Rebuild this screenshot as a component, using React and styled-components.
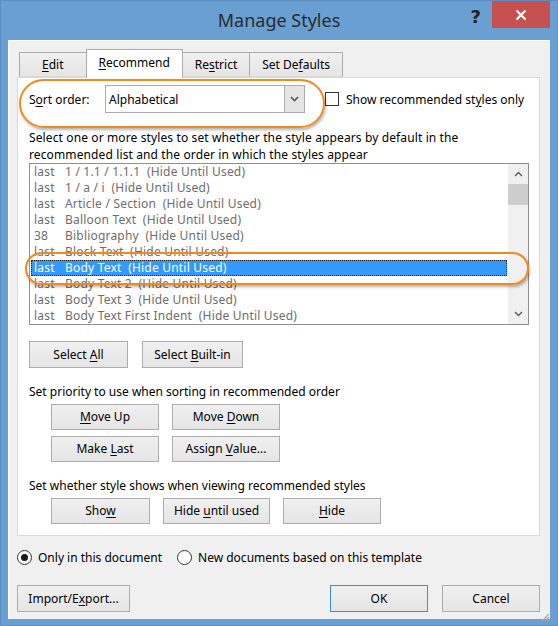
import React from "react";
import styled, { createGlobalStyle } from "styled-components";

const GlobalStyle = createGlobalStyle`
  html, body {
    margin: 0;
    padding: 0;
    background: #6a9fd2;
  }
  body {
    font-family: "Noto Sans", "DejaVu Sans", sans-serif;
    font-size: 12px;
    color: #000;
  }
`;

const styles = [
  { priority: "last", name: "1 / 1.1 / 1.1.1" },
  { priority: "last", name: "1 / a / i" },
  { priority: "last", name: "Article / Section" },
  { priority: "last", name: "Balloon Text" },
  { priority: "38", name: "Bibliography" },
  { priority: "last", name: "Block Text" },
  { priority: "last", name: "Body Text", selected: true },
  { priority: "last", name: "Body Text 2" },
  { priority: "last", name: "Body Text 3" },
  { priority: "last", name: "Body Text First Indent" },
];

const App = () => {
  return (
    <>
      <GlobalStyle />
      <Window>
        <TitleBar>
          <span />
          <Title>Manage Styles</Title>
          <TitleButtons>
            <HelpButton>?</HelpButton>
            <CloseButton>
              <svg width="12" height="12" viewBox="0 0 12 12">
                <path d="M1.5 1.5 L10.5 10.5 M10.5 1.5 L1.5 10.5" stroke="#fff" strokeWidth="2.2" />
              </svg>
            </CloseButton>
          </TitleButtons>
        </TitleBar>

        <Client>
          <TabStrip>
            <Tab $first><U>E</U>dit</Tab>
            <Tab $active><U>R</U>ecommend</Tab>
            <Tab>Re<U>s</U>trict</Tab>
            <Tab>Set De<U>f</U>aults</Tab>
          </TabStrip>

          <Panel>
            <Highlight $left={1} $top={1} $width={306} $height={49} />
            <Highlight $left={7} $top={174} $width={504} $height={33} />

            <SortRow>
              <SortLabel>S<U>o</U>rt order:</SortLabel>
              <Combo>
                <ComboValue>Alphabetical</ComboValue>
                <ComboButton>
                  <svg width="9" height="6" viewBox="0 0 9 6">
                    <path d="M1 1 L4.5 4.5 L8 1" stroke="#555" strokeWidth="1.6" fill="none" />
                  </svg>
                </ComboButton>
              </Combo>
              <CheckLabel>
                <CheckBox />
                <span>Show recommended st<U>y</U>les only</span>
              </CheckLabel>
            </SortRow>

            <Description>
              Select one or more styles to set whether the style appears by default in the
              <br />
              recommended list and the order in which the styles appear
            </Description>

            <ListBox>
              <ListRows>
                {styles.map((s) => (
                  <ListRow key={s.name} $selected={s.selected}>
                    <Priority>{s.priority}</Priority>
                    <StyleName>{s.name + "  (Hide Until Used)"}</StyleName>
                  </ListRow>
                ))}
              </ListRows>
              <Scrollbar>
                <ScrollArrow>
                  <svg width="9" height="6" viewBox="0 0 9 6">
                    <path d="M1 5 L4.5 1.5 L8 5" stroke="#606060" strokeWidth="1.5" fill="none" />
                  </svg>
                </ScrollArrow>
                <Track>
                  <Thumb />
                </Track>
                <ScrollArrow>
                  <svg width="9" height="6" viewBox="0 0 9 6">
                    <path d="M1 1 L4.5 4.5 L8 1" stroke="#606060" strokeWidth="1.5" fill="none" />
                  </svg>
                </ScrollArrow>
              </Scrollbar>
            </ListBox>

            <ButtonRow $top={16}>
              <Button $w={99} $h={27}>Select <U>A</U>ll</Button>
              <Button $w={101} $h={27}>Select <U>B</U>uilt-in</Button>
            </ButtonRow>

            <SectionText>Set priority to use when sorting in recommended order</SectionText>
            <ButtonGrid>
              <Button $w={108}><U>M</U>ove Up</Button>
              <Button $w={108}>Move <U>D</U>own</Button>
              <Button $w={108}>Make <U>L</U>ast</Button>
              <Button $w={108}>Assign <U>V</U>alue...</Button>
            </ButtonGrid>

            <SectionText>Set whether style shows when viewing recommended styles</SectionText>
            <ButtonRow $top={4} $indent={22} $gap={13}>
              <Button $w={99}>Sho<U>w</U></Button>
              <Button $w={107}>Hide <U>u</U>ntil used</Button>
              <Button $w={98}><U>H</U>ide</Button>
            </ButtonRow>
          </Panel>

          <RadioRow>
            <RadioLabel>
              <Radio $checked />
              <span>Only in this document</span>
            </RadioLabel>
            <RadioLabel>
              <Radio />
              <span>New documents based on this template</span>
            </RadioLabel>
          </RadioRow>

          <Footer>
            <Button $w={113} $h={27}>Import/E<U>x</U>port...</Button>
            <FooterRight>
              <Button $w={98} $h={27} $default>OK</Button>
              <Button $w={98} $h={27}>Cancel</Button>
            </FooterRight>
          </Footer>

          <Grip>
            <svg width="10" height="10" viewBox="0 0 10 10">
              <path d="M9 2 L2 9 M9 5 L5 9 M9 8 L8 9" stroke="#a8a8a8" strokeWidth="1.2" />
            </svg>
          </Grip>
        </Client>
      </Window>
    </>
  );
};

const Window = styled.div`
  width: 558px;
  height: 626px;
  box-sizing: border-box;
  background: #6a9fd2;
  border: 1px solid #5b8fc4;
  display: flex;
  flex-direction: column;
`;

const TitleBar = styled.div`
  height: 39px;
  display: grid;
  grid-template-columns: 1fr auto 1fr;
  align-items: start;
`;

const Title = styled.div`
  font-family: "Noto Sans", sans-serif;
  font-size: 18px;
  color: #2b2b2b;
  line-height: 40px;
  margin-top: -1px;
`;

const TitleButtons = styled.div`
  display: flex;
  justify-content: flex-end;
  align-items: flex-start;
  gap: 11px;
  padding-right: 7px;
`;

const HelpButton = styled.div`
  font-family: "DejaVu Sans", sans-serif;
  font-weight: bold;
  font-size: 18px;
  color: #222;
  line-height: 27px;
  margin-top: 2px;
`;

const CloseButton = styled.div`
  width: 58px;
  height: 27px;
  background: #c75050;
  display: flex;
  align-items: center;
  justify-content: center;
`;

const Client = styled.div`
  position: relative;
  flex: 1;
  margin: 0 7px 6px 7px;
  background: #f0f0f0;
  border-top: 1px solid #fdfdfd;
  border-left: 1px solid #fdfdfd;
  padding: 8px 10px 7px 8px;
  display: flex;
  flex-direction: column;
`;

const TabStrip = styled.div`
  display: flex;
  align-items: flex-end;
  height: 28px;
  padding-left: 2px;
  position: relative;
  z-index: 1;
`;

const Tab = styled.div`
  box-sizing: border-box;
  height: ${(p) => (p.$active ? "29px" : "25px")};
  margin-bottom: ${(p) => (p.$active ? "-1px" : "0")};
  margin-left: ${(p) => (p.$first ? "0" : "-1px")};
  padding: ${(p) => (p.$active ? "0 12px 4px" : p.$first ? "0 22px" : "0 12px")};
  border: 1px solid #acacac;
  border-bottom: ${(p) => (p.$active ? "none" : "1px solid #d9d9d9")};
  background: ${(p) => (p.$active ? "#fff" : "linear-gradient(#f0f0f0, #e5e5e5)")};
  display: flex;
  align-items: center;
  font-size: 12px;
  white-space: pre;
`;

const U = styled.span`
  text-decoration: underline;
  text-underline-offset: 2px;
`;

const Panel = styled.div`
  position: relative;
  height: 459px;
  box-sizing: border-box;
  background: #fff;
  border: 1px solid #d9d9d9;
  padding: 7px 10px 0 11px;
  display: flex;
  flex-direction: column;
`;

const Highlight = styled.div`
  position: absolute;
  left: ${(p) => p.$left}px;
  top: ${(p) => p.$top}px;
  width: ${(p) => p.$width}px;
  height: ${(p) => p.$height}px;
  box-sizing: border-box;
  border: 2px solid #f2891c;
  border-radius: ${(p) => p.$height / 2}px;
  box-shadow: 1px 2px 3px rgba(0, 0, 0, 0.3);
  pointer-events: none;
  z-index: 2;
`;

const SortRow = styled.div`
  display: flex;
  align-items: center;
  height: 28px;
`;

const SortLabel = styled.div`
  width: 76px;
`;

const Combo = styled.div`
  width: 200px;
  height: 28px;
  box-sizing: border-box;
  border: 1px solid #acacac;
  background: #fff;
  display: flex;
`;

const ComboValue = styled.div`
  flex: 1;
  padding-left: 3px;
  display: flex;
  align-items: center;
`;

const ComboButton = styled.div`
  width: 19px;
  background: #e5e5e5;
  border-left: 1px solid #acacac;
  display: flex;
  align-items: center;
  justify-content: center;
`;

const CheckLabel = styled.div`
  display: flex;
  align-items: center;
  gap: 7px;
  margin-left: 20px;
`;

const CheckBox = styled.div`
  width: 14px;
  height: 14px;
  box-sizing: border-box;
  border: 1px solid #333;
  background: #fff;
`;

const Description = styled.div`
  margin-top: 16px;
  line-height: 17px;
  letter-spacing: 0.12px;
`;

const ListBox = styled.div`
  width: 500px;
  height: 162px;
  box-sizing: border-box;
  border: 1px solid #8f8f8f;
  display: flex;
`;

const ListRows = styled.div`
  flex: 1;
  padding: 0 1px;
`;

const ListRow = styled.div`
  height: 16px;
  box-sizing: border-box;
  display: flex;
  align-items: center;
  padding-left: 3px;
  line-height: 16px;
  letter-spacing: 0.2px;
  color: ${(p) => (p.$selected ? "#fff" : "#6d6d6d")};
  background: ${(p) => (p.$selected ? "#3399ff" : "transparent")};
  outline: ${(p) => (p.$selected ? "1px dotted #222" : "none")};
  outline-offset: -1px;
`;

const Priority = styled.span`
  width: 31px;
`;

const StyleName = styled.span`
  white-space: pre;
`;

const Scrollbar = styled.div`
  width: 20px;
  background: #f0f0f0;
  display: flex;
  flex-direction: column;
`;

const ScrollArrow = styled.div`
  height: 20px;
  display: flex;
  align-items: center;
  justify-content: center;
`;

const Track = styled.div`
  flex: 1;
`;

const Thumb = styled.div`
  height: 21px;
  background: #cdcdcd;
`;

const ButtonRow = styled.div`
  display: flex;
  gap: ${(p) => p.$gap || 14}px;
  margin-top: ${(p) => p.$top}px;
  padding-left: ${(p) => p.$indent || 0}px;
`;

const ButtonGrid = styled.div`
  display: grid;
  grid-template-columns: 108px 108px;
  column-gap: 13px;
  row-gap: 6px;
  margin-top: 4px;
  padding-left: 22px;
`;

const Button = styled.div`
  width: ${(p) => p.$w}px;
  height: ${(p) => p.$h || 26}px;
  box-sizing: border-box;
  border: 1px solid ${(p) => (p.$default ? "#3c8fdc" : "#adadad")};
  background: linear-gradient(#f0f0f0, #e5e5e5);
  text-align: center;
  line-height: ${(p) => (p.$h || 26) - 2}px;
  font-size: 12px;
  white-space: pre;
`;

const SectionText = styled.div`
  margin-top: 15px;
  line-height: 17px;
`;

const RadioRow = styled.div`
  display: flex;
  gap: 15px;
  margin-top: 13px;
  height: 16px;
  align-items: center;
`;

const RadioLabel = styled.div`
  display: flex;
  align-items: center;
  gap: 6px;
`;

const Radio = styled.div`
  width: 15px;
  height: 15px;
  box-sizing: border-box;
  border-radius: 50%;
  border: 1px solid #333;
  background: #fff;
  display: flex;
  align-items: center;
  justify-content: center;
  &::after {
    content: "";
    width: 7px;
    height: 7px;
    border-radius: 50%;
    background: ${(p) => (p.$checked ? "#1a1a1a" : "transparent")};
  }
`;

const Footer = styled.div`
  display: flex;
  justify-content: space-between;
  margin-top: auto;
`;

const FooterRight = styled.div`
  display: flex;
  gap: 14px;
`;

const Grip = styled.div`
  position: absolute;
  right: 0;
  bottom: 0;
  width: 10px;
  height: 10px;
`;

export default App;
